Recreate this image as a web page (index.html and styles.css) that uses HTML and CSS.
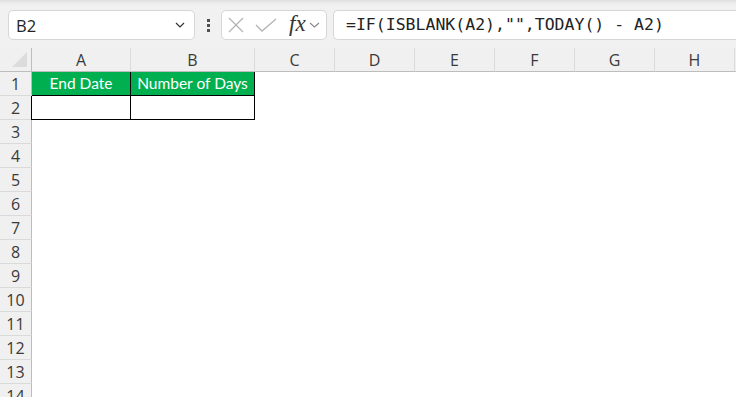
FILE: index.html
```html
<!DOCTYPE html>
<html>
<head>
<meta charset="utf-8">
<link rel="stylesheet" href="styles.css">
</head>
<body>
<div class="app">
  <div class="toolbar">
    <div class="namebox">
      <span class="name">B2</span>
      <svg class="chev" width="10" height="6" viewBox="0 0 10 6"><path d="M1 1 L5 5 L9 1" fill="none" stroke="#333" stroke-width="1.2"/></svg>
    </div>
    <div class="dots"><i></i><i></i><i></i></div>
    <div class="fxbox">
      <svg class="ic-x" width="16" height="16" viewBox="0 0 16 16"><path d="M1 1 L15 15 M15 1 L1 15" stroke="#b4b4b4" stroke-width="1.3" fill="none"/></svg>
      <svg class="ic-ok" width="22" height="14" viewBox="0 0 22 14"><path d="M1 7 L7 13 L21 1" stroke="#b4b4b4" stroke-width="1.3" fill="none"/></svg>
      <span class="fx">fx</span>
      <svg class="chev2" width="11" height="6" viewBox="0 0 11 6"><path d="M1 1 L5.5 5 L10 1" fill="none" stroke="#888" stroke-width="1.1"/></svg>
    </div>
    <div class="formula">=IF(ISBLANK(A2),"",TODAY() - A2)</div>
  </div>
  <div class="sheet">
    <div class="corner"><span class="tri"></span></div>
    <div class="ch">A</div><div class="ch">B</div><div class="ch">C</div><div class="ch">D</div><div class="ch">E</div><div class="ch">F</div><div class="ch">G</div><div class="ch">H</div><div class="ch last"></div>

    <div class="rh">1</div>
    <div class="cell hd">End Date</div><div class="cell hd">Number of Days</div>
    <div class="blank"></div>

    <div class="rh">2</div>
    <div class="cell dt first"></div><div class="cell dt"></div>
    <div class="blank"></div>

    <div class="rh">3</div><div class="fill"></div>
    <div class="rh">4</div><div class="fill"></div>
    <div class="rh">5</div><div class="fill"></div>
    <div class="rh">6</div><div class="fill"></div>
    <div class="rh">7</div><div class="fill"></div>
    <div class="rh">8</div><div class="fill"></div>
    <div class="rh">9</div><div class="fill"></div>
    <div class="rh">10</div><div class="fill"></div>
    <div class="rh">11</div><div class="fill"></div>
    <div class="rh">12</div><div class="fill"></div>
    <div class="rh">13</div><div class="fill"></div>
    <div class="rh">14</div><div class="fill"></div>
  </div>
</div>
</body>
</html>
```

FILE: styles.css
```css
html, body {
  margin: 0;
  padding: 0;
  background: #ffffff;
  overflow: hidden;
}
.app {
  width: 736px;
  height: 397px;
  overflow: hidden;
  font-family: "Open Sans", "Noto Sans", sans-serif;
  color: #333;
}
.toolbar {
  height: 48px;
  box-sizing: border-box;
  background: linear-gradient(#dedede 0px, #ececec 3px, #f1f1f1 5px, #f1f1f1 100%);
  padding: 10px 0 0 8px;
  display: flex;
  align-items: flex-start;
}
.namebox {
  width: 187px;
  height: 30px;
  box-sizing: border-box;
  background: #fff;
  border: 1px solid #d6d6d6;
  border-radius: 5px;
  display: flex;
  align-items: center;
  padding: 0 9px 0 7px;
}
.name {
  flex: 1;
  font-size: 16.5px;
  color: #222;
}
.chev { display: block; }
.dots {
  width: 26px;
  height: 30px;
  display: flex;
  flex-direction: column;
  align-items: center;
  justify-content: center;
  gap: 2px;
}
.dots i {
  display: block;
  width: 3px;
  height: 3px;
  background: #505050;
}
.fxbox {
  width: 106px;
  height: 30px;
  box-sizing: border-box;
  background: #fff;
  border: 1px solid #d6d6d6;
  border-radius: 5px;
  display: flex;
  align-items: center;
  padding-left: 6px;
}
.ic-x { display: block; margin-right: 11px; }
.ic-ok { display: block; margin-right: 12px; }
.fx {
  font-family: "Liberation Serif", "DejaVu Serif", serif;
  font-style: italic;
  font-size: 23px;
  color: #333;
  margin-right: 3px;
  line-height: 1;
  margin-top: -3px;
}
.chev2 { display: block; }
.formula {
  flex: 1;
  margin-left: 6px;
  height: 30px;
  box-sizing: border-box;
  background: #fff;
  border: 1px solid #d6d6d6;
  border-right: none;
  border-radius: 5px 0 0 5px;
  font-family: "DejaVu Sans Mono", "Liberation Mono", monospace;
  font-size: 16.5px;
  line-height: 28px;
  padding-left: 12px;
  color: #222;
  white-space: pre;
}
.sheet {
  display: grid;
  grid-template-columns: 32px 99px 124px 80px 80px 80px 80px 80px 80px 1fr;
  grid-auto-rows: 24px;
}
.corner, .ch, .rh {
  background: #f0f0f0;
  box-sizing: border-box;
}
.corner {
  border-right: 1px solid #bdbdbd;
  border-bottom: 1px solid #bdbdbd;
  position: relative;
}
.tri {
  position: absolute;
  left: 12px;
  top: 4px;
  width: 0;
  height: 0;
  border-left: 15px solid transparent;
  border-bottom: 15px solid #dcdcdc;
}
.ch {
  border-right: 1px solid #dadada;
  border-bottom: 1px solid #bdbdbd;
  text-align: center;
  font-size: 16px;
  line-height: 24px;
  color: #3a3a3a;
}
.ch.last { border-right: none; }
.rh {
  grid-column: 1;
  border-right: 1px solid #bdbdbd;
  border-bottom: 1px solid #dadada;
  text-align: center;
  font-size: 16px;
  line-height: 24px;
  color: #3a3a3a;
}
.cell {
  box-sizing: border-box;
  border-right: 1px solid #000;
  border-bottom: 1px solid #000;
}
.hd {
  background: #00b050;
  color: #fff;
  text-align: center;
  font-family: "Lato", "Open Sans", sans-serif;
  font-size: 15.5px;
  line-height: 23px;
  white-space: nowrap;
}
.dt { background: #fff; }
.dt.first { box-shadow: -1px 0 0 #000; }
.blank { grid-column: 4 / -1; }
.fill { grid-column: 2 / -1; }
```
